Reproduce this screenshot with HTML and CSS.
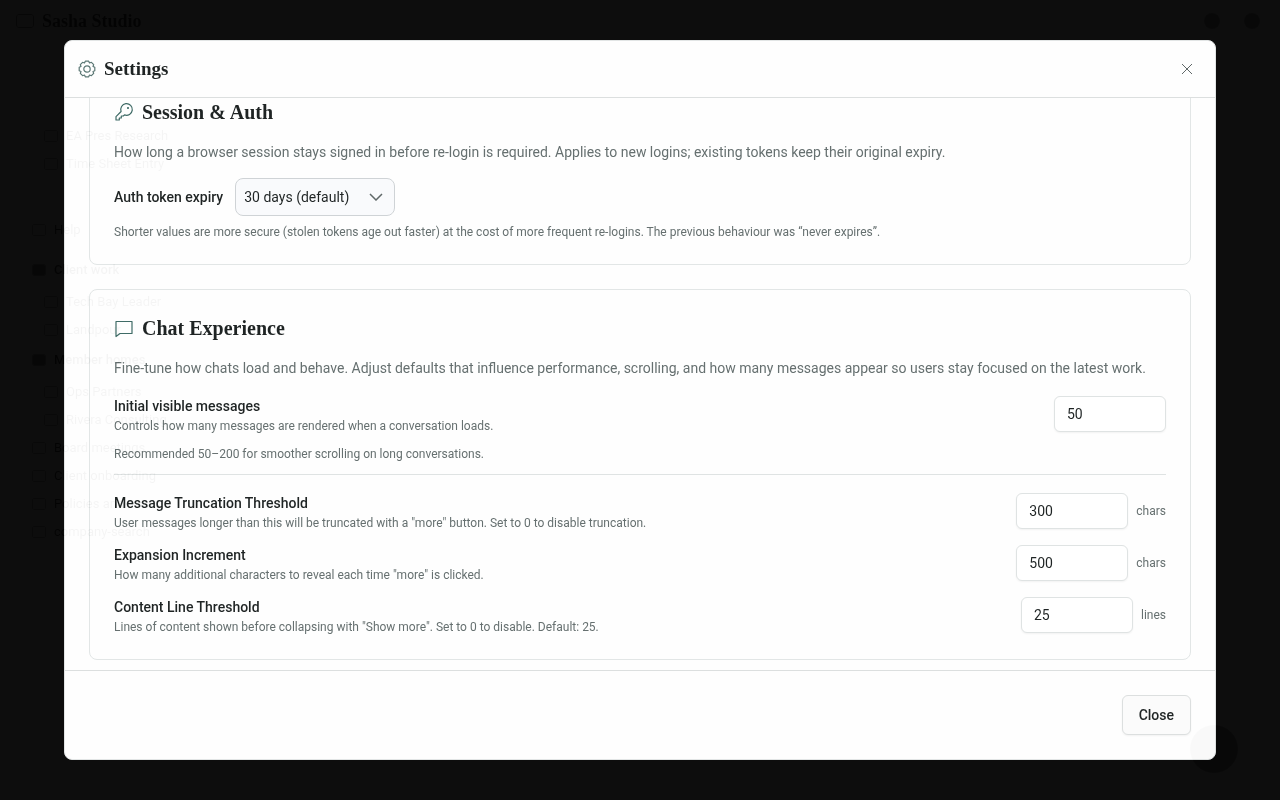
FILE: index.html
```html
<!DOCTYPE html>
<html lang="en">
<head>
<meta charset="utf-8">
<meta name="viewport" content="width=device-width, initial-scale=1">
<title>Settings</title>
<link rel="stylesheet" href="styles.css">
</head>
<body>
<div class="overlay">
  <section class="dialog" role="dialog" aria-modal="true" aria-labelledby="dialog-title">
    <header class="dialog-header">
      <svg class="icon" width="18" height="18" viewBox="0 0 18 18" aria-hidden="true"><path d="M16.8 7.300V10.700L15 11.500L15.700 13.400L13.400 15.700L11.500 15L10.700 16.800H7.300L6.500 15L4.600 15.700L2.300 13.400L3 11.500L1.200 10.700V7.300L3 6.500L2.300 4.600L4.600 2.300L6.500 3L7.300 1.200H10.700L11.500 3L13.400 2.300L15.700 4.600L15 6.500Z"/><circle cx="9" cy="9" r="3.200"/></svg>
      <h1 class="dialog-title" id="dialog-title">Settings</h1>
      <button class="dismiss" type="button" aria-label="Dismiss"><svg width="12" height="12" viewBox="0 0 12 12" aria-hidden="true"><path d="M1 1l10 10M11 1L1 11"/></svg></button>
    </header>

    <div class="dialog-body">
      <section class="card">
        <h2 class="card-title"><svg class="icon" width="20" height="20" viewBox="0 0 20 20" aria-hidden="true"><path d="M7.100 9.500A5.800 5.800 0 1 1 10.500 12.900L9.300 14H7.300V16H5.300V18H2V14.600Z"/><circle cx="14" cy="6" r=".5"/></svg>Session &amp; Auth</h2>
        <p class="lead">How long a browser session stays signed in before re-login is required. Applies to new logins; existing tokens keep their original expiry.</p>
        <div class="expiry">
          <label class="label" for="expiry">Auth token expiry</label>
          <div class="select-wrap">
            <select class="select" id="expiry"><option>30 days (default)</option></select>
            <svg class="chevron" width="14" height="8" viewBox="0 0 14 8" aria-hidden="true"><path d="M1 1l6 6 6-6"/></svg>
          </div>
        </div>
        <p class="hint">Shorter values are more secure (stolen tokens age out faster) at the cost of more frequent re-logins. The previous behaviour was “never expires”.</p>
      </section>

      <section class="card">
        <h2 class="card-title"><svg class="icon" width="20" height="20" viewBox="0 0 20 20" aria-hidden="true"><path d="M2 3.500h16v12H6L2 18.500z"/></svg>Chat Experience</h2>
        <p class="lead">Fine-tune how chats load and behave. Adjust defaults that influence performance, scrolling, and how many messages appear so users stay focused on the latest work.</p>
        <div class="row row-first">
          <div class="row-text">
            <label class="label" for="visible">Initial visible messages</label>
            <p class="hint">Controls how many messages are rendered when a conversation loads.</p>
            <p class="hint hint-extra">Recommended 50–200 for smoother scrolling on long conversations.</p>
          </div>
          <input class="number" id="visible" type="text" inputmode="numeric" value="50">
        </div>
        <div class="rows">
          <div class="row">
            <div class="row-text">
              <label class="label" for="truncate">Message Truncation Threshold</label>
              <p class="hint">User messages longer than this will be truncated with a "more" button. Set to 0 to disable truncation.</p>
            </div>
            <div class="field"><input class="number" id="truncate" type="text" inputmode="numeric" value="300"><span class="hint">chars</span></div>
          </div>
          <div class="row">
            <div class="row-text">
              <label class="label" for="expand">Expansion Increment</label>
              <p class="hint">How many additional characters to reveal each time "more" is clicked.</p>
            </div>
            <div class="field"><input class="number" id="expand" type="text" inputmode="numeric" value="500"><span class="hint">chars</span></div>
          </div>
          <div class="row">
            <div class="row-text">
              <label class="label" for="lines">Content Line Threshold</label>
              <p class="hint">Lines of content shown before collapsing with "Show more". Set to 0 to disable. Default: 25.</p>
            </div>
            <div class="field"><input class="number" id="lines" type="text" inputmode="numeric" value="25"><span class="hint">lines</span></div>
          </div>
        </div>
      </section>
    </div>

    <footer class="dialog-footer"><button class="close" type="button">Close</button></footer>
  </section>
</div>

<div class="backdrop" aria-hidden="true">
  <div class="topbar">
    <span class="brand-mark"></span>
    <span class="brand">Sasha Studio</span>
    <span class="dot"></span><span class="dot"></span>
  </div>
  <ul class="nav">
    <li class="child">EA Pres Research</li>
    <li class="child">Time Sheet Entry</li>
    <li class="help">Help</li>
    <li class="group">Client work</li>
    <li class="child">Tech Bay Leader</li>
    <li class="child">Landpour</li>
    <li class="group">Member homes</li>
    <li class="child">Ops Partners</li>
    <li class="child">Rivera Consulting</li>
    <li>Board meetings</li>
    <li>Client onboarding</li>
    <li>Policies and</li>
    <li>company-search</li>
  </ul>
  <span class="bubble"></span>
</div>
</body>
</html>
```
FILE: styles.css
```css
* { box-sizing: border-box; }

body {
  margin: 0;
  background: #0d0d0d;
  color: #1f2424;
  font-family: Roboto, "Liberation Sans", sans-serif;
  font-size: 14px;
  line-height: 20px;
}

h1, h2, p, ul { margin: 0; }

.overlay {
  height: 100vh;
  padding: 5vh 5vw;
}

.dialog {
  display: flex;
  flex-direction: column;
  height: 100%;
  overflow: hidden;
  border: 1px solid #e2e5e5;
  border-radius: 8px;
  background: #fefefe;
}

.dialog-header {
  display: flex;
  align-items: center;
  gap: 8px;
  padding: 14px 20px 14px 13px;
  border-bottom: 1px solid #dcdfdf;
}

.icon {
  flex: none;
  fill: none;
  stroke: #3f6b66;
  stroke-width: 1.2;
  stroke-linejoin: round;
  stroke-linecap: round;
}

.dialog-header .icon { stroke: #5c7875; }

.dialog-title, .card-title {
  font-family: "Liberation Serif", serif;
  font-weight: 700;
  line-height: 28px;
}

.dialog-title { flex: 1; font-size: 19px; }

.dismiss {
  display: flex;
  padding: 2px;
  border: 0;
  background: none;
}

.dismiss svg, .chevron { fill: none; stroke: #606868; }

.dialog-body {
  display: flex;
  flex: 1;
  flex-direction: column;
  justify-content: flex-end;
  gap: 24px;
  min-height: 0;
  padding: 0 24px 10px;
  overflow: hidden;
}

.card {
  flex: none;
  padding: 24px;
  border: 1px solid #e2e6e6;
  border-radius: 8px;
}

.card-title {
  display: flex;
  align-items: center;
  gap: 8px;
  margin-bottom: 16px;
  font-size: 20px;
}

.lead { color: #667070; }

.label { display: block; font-weight: 500; }

.hint {
  color: #667070;
  font-size: 12px;
  line-height: 16px;
}

.expiry {
  display: flex;
  align-items: center;
  gap: 12px;
  margin: 16px 0 8px;
}

.select-wrap { display: grid; align-items: center; }

.select, .chevron { grid-area: 1 / 1; }

.chevron {
  justify-self: end;
  margin-right: 12px;
  stroke-width: 1.5;
  pointer-events: none;
}

.select {
  width: 160px;
  height: 38px;
  padding: 0 8px;
  appearance: none;
  border: 1px solid #cfd3d6;
  border-radius: 8px;
  background: #f9fafc;
  color: inherit;
  font: inherit;
}

.row {
  display: flex;
  align-items: flex-start;
  justify-content: space-between;
  gap: 16px;
}

.row-first {
  margin-top: 18px;
  padding-bottom: 12px;
  border-bottom: 1px solid #dfe3e3;
}

.row-text .hint { margin-top: 2px; }

.row-text .hint-extra { margin-top: 12px; }

.rows {
  display: flex;
  flex-direction: column;
  gap: 14px;
  margin-top: 18px;
}

.field { display: flex; align-items: center; gap: 8px; }

.number {
  width: 112px;
  height: 36px;
  padding: 0 12px;
  border: 1px solid #dfe3e3;
  border-radius: 6px;
  background: #fff;
  box-shadow: 0 1px 2px rgb(0 0 0 / 5%);
  color: inherit;
  font: inherit;
}

.dialog-footer {
  display: flex;
  justify-content: flex-end;
  padding: 24px;
  border-top: 1px solid #dcdfdf;
}

.close {
  height: 40px;
  padding: 0 16px;
  border: 1px solid #dcdfdf;
  border-radius: 6px;
  background: #fbfbfb;
  box-shadow: 0 1px 2px rgb(0 0 0 / 5%);
  color: inherit;
  font: inherit;
  font-weight: 500;
}

.backdrop {
  position: absolute;
  inset: 0;
  overflow: hidden;
  color: #0a0a0a;
  mix-blend-mode: difference;
  pointer-events: none;
}

.topbar {
  display: flex;
  align-items: center;
  gap: 8px;
  padding: 10px 20px 10px 16px;
}

.brand {
  flex: 1;
  font: 700 18px/22px "Liberation Serif", serif;
}

.brand-mark {
  width: 18px;
  height: 14px;
  border: 1px solid #060606;
  border-radius: 3px;
}

.dot {
  width: 16px;
  height: 16px;
  margin-left: 16px;
  border-radius: 50%;
  background: #050505;
}

.nav {
  padding: 80px 0 0 52px;
  list-style: none;
  font-size: 13px;
  line-height: 28px;
}

.nav li { display: flex; align-items: center; }

.nav li::before {
  width: 12px;
  height: 10px;
  margin: 0 8px 0 -20px;
  border: 1px solid #040404;
  border-radius: 2px;
  content: "";
}

.nav .child { padding-left: 12px; }

.nav .help { margin: 38px 0 12px; }

.nav .group { margin: 2px 0 4px; font-weight: 500; }

.nav .group::before { background: #060606; }

.bubble {
  position: absolute;
  right: 42px;
  bottom: 27px;
  width: 48px;
  height: 48px;
  border-radius: 50%;
  background: #050505;
}
```
